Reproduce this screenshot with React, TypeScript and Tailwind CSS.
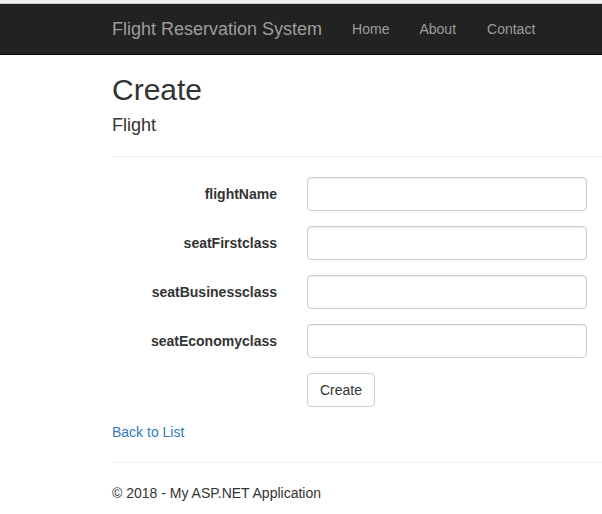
const fields = ['flightName', 'seatFirstclass', 'seatBusinessclass', 'seatEconomyclass'];

const App: React.FC = () => {
  return (
    <div className="min-h-[514px] bg-white text-[14px] leading-[20px] text-[#333] font-['Liberation_Sans',Arial,sans-serif]">
      <div className="h-[4px] bg-[#f0f0f0] border-b border-[#cfcfcf]" />
      <nav className="h-[51px] bg-[#222] border-b border-[#080808] pl-[112px] flex items-center">
        <a className="text-[18px] leading-[20px] text-[#9d9d9d] mr-[30px]">Flight Reservation System</a>
        <div className="flex gap-[30px] text-[#9d9d9d]">
          <a>Home</a>
          <a>About</a>
          <a className="ml-px">Contact</a>
        </div>
      </nav>
      <main className="pl-[112px]">
        <h2 className="mt-[18px] text-[30px] leading-[33px] font-normal">Create</h2>
        <h4 className="mt-[10px] text-[18px] leading-[19.8px] font-normal">Flight</h4>
        <hr className="mt-[20px] mb-[20px] border-t border-[#eee]" />
        <form className="flex flex-col">
          {fields.map((name) => (
            <div key={name} className="mb-[15px] grid grid-cols-[165px_280px] gap-x-[30px]">
              <label className="pt-[7px] text-right font-bold">{name}</label>
              <input className="h-[34px] rounded-[4px] border border-[#ccc] px-3 shadow-[inset_0_1px_1px_rgba(0,0,0,0.075)]" />
            </div>
          ))}
          <div className="mb-[15px] pl-[195px]">
            <button type="button" className="h-[34px] px-[12px] rounded-[4px] border border-[#ccc] bg-white text-[#333]">Create</button>
          </div>
        </form>
        <div>
          <a className="text-[#337ab7]">Back to List</a>
        </div>
        <hr className="mt-[20px] mb-[20px] border-t border-[#eee]" />
        <footer>
          <p>© 2018 - My ASP.NET Application</p>
        </footer>
      </main>
    </div>
  );
};

export default App;
